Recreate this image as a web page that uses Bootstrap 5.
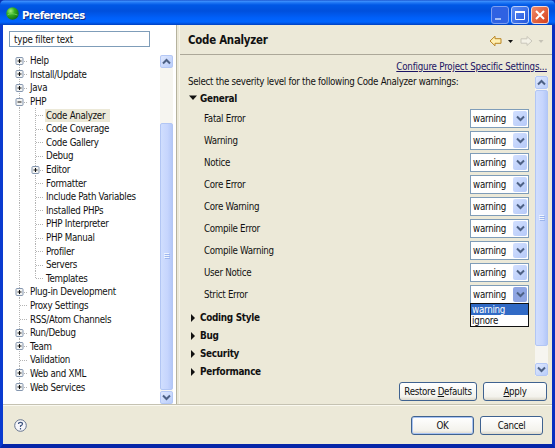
<!DOCTYPE html>
<html lang="en">
<head>
<meta charset="utf-8">
<title>Preferences</title>
<link href="https://cdn.jsdelivr.net/npm/bootstrap@5.3.0/dist/css/bootstrap.min.css" rel="stylesheet">
<style>
html,body{height:448px;overflow:hidden}
body{font-family:"DejaVu Sans Condensed","DejaVu Sans",sans-serif;font-stretch:condensed;font-size:9.7px;line-height:13px;color:#111;background:#0831b4;letter-spacing:-.29px;white-space:nowrap}
svg{display:block;flex:none}
.win{width:555px;height:448px}
.titlebar{height:25px;padding:1px 6px 0 6px;background:linear-gradient(#0a3fc0 0,#4596ff 1px,#2a80f8 2px,#0058e6 5px,#0050dd 11px,#0060fa 18px,#0065ff 22px,#0040c0 25px);border-radius:5px 5px 0 0;color:#fff}
.titlebar .caption{font-size:11.2px;font-weight:bold;text-shadow:1px 1px #0a2a80;letter-spacing:-.5px;margin-left:3px;padding-top:4px}
.winbtns{gap:2px;padding-top:3px}
.winbtn{width:18px;height:18px;border:1px solid #b9cdf8;border-radius:3px;background:linear-gradient(135deg,#5c8cf4,#2458dc)}
.winbtn.dim{border-color:#7d9ff0;background:#2f62e2}
.winbtn.quit{border-color:#f6d8cf;background:linear-gradient(135deg,#f08a68,#d5401c)}
.frame-body{height:423px;background:#ece9d8;border:solid #0a3bd0;border-width:0 3px 4px 3px;border-bottom-color:#0626a8;border-right-color:#0a2fc0}
.upper{height:379px}
.tree-pane{width:173px;background:#fff}
.filter{width:141px;height:16px;margin:6px 0 0 6px;border:1px solid #7f9db9;padding:1px 4px 0;line-height:14px;letter-spacing:-.22px}
.tree{width:157px;margin-top:7px;padding-left:12px}
.node{height:13.6px}
.node .name{margin-left:2px;padding:0 1px}
.node.child .name{margin-left:2px}
.node.child .name.sel{background:#ece9d8;padding-right:5px;margin-right:-5px}
.sb{width:13px;background:#f6f5f0}
.sb-btn{height:13px;border:1px solid #b4c8f6;border-radius:2px;background:linear-gradient(135deg,#dfe8fe,#b9cdfa)}
.sb-thumb{border:1px solid #b2c6f4;border-radius:2px;background:linear-gradient(90deg,#d0defe,#c6d5fd 60%,#b4c8f8)}
.sb.left{margin-top:8px;height:349px}
.sb.left .sb-thumb{margin-top:55px;margin-bottom:1px}
.sb.right .sb-thumb{height:256px;margin-top:1px}
.sash{width:4px;background:#ece9d8;border-left:1px solid #b5b29e;border-right:1px solid #f7f5ea}
.head{height:30px;border-bottom:1px solid #aca899;padding:2px 6px 0 8px}
.head .ttl{font-size:11.4px;font-weight:bold;letter-spacing:-.25px}
.conf{color:#1b1464;text-decoration:underline;text-underline-offset:1px;height:21px;padding:5px 5px 0 0;letter-spacing:-.2px}
.opts{height:300px;padding:0 4px 0 8px}
.lead-in{width:0;margin-top:-1px}
.sec{font-weight:bold;height:18px;letter-spacing:-.3px;font-size:9.9px}
.sec svg{margin-right:2px}
.sec.open{margin-top:1px}
.optlist{margin-bottom:3px}
.opt{height:22.1px;padding:0 6px 0 16px}
.pick{width:59px;height:19px;border:1px solid #7f9db9;background:#fff;padding:0 1px 0 2px;letter-spacing:-.25px}
.arrow{width:14px;height:15px;border-radius:2px;background:linear-gradient(135deg,#d3e0ff,#b5c9f8)}
.arrow.on{background:#8fa5e2}
.drop{top:17px;left:-1px;width:59px;height:24px;border:1px solid #111;background:#fff;z-index:3;line-height:12px}
.drop div{height:11px;padding-left:1px}
.drop .hit{background:#316ac5;color:#fff}
.xp{height:19px;border:1px solid #3f6290;border-radius:3px;background:linear-gradient(#fff,#f3f2ec 80%,#dcd8cb);padding:0;font-size:9.7px;line-height:17px;color:#111;letter-spacing:-.3px}
.xp.main{box-shadow:inset 0 0 0 1px #a9c4f3}
.foot{height:40px;border-top:1px solid #c5c2b2;box-shadow:inset 0 1px #faf9f0;padding:1px 9px 0 11px}
.acts{gap:6px;padding-right:5px;margin-top:6px}
.rest{width:78px}
.appl{width:64px}
.ok,.canc{width:63px}
.ok{margin-right:6px}
</style>
<script src="https://cdn.jsdelivr.net/npm/bootstrap@5.3.0/dist/js/bootstrap.bundle.min.js"></script>
</head>
<body>
<svg width="0" height="0" class="position-absolute"><defs>
<symbol id="up" viewBox="0 0 9 7"><path d="M1 5.5 4.5 2 8 5.5" fill="none" stroke="#4d6185" stroke-width="2"/></symbol>
<symbol id="dn" viewBox="0 0 9 7"><path d="M1 1.5 4.5 5 8 1.5" fill="none" stroke="#4d6185" stroke-width="2"/></symbol>
<symbol id="grip" viewBox="0 0 6 7"><path d="M0 .5h5M0 2.5h5M0 4.5h5" stroke="#eef4fe"/><path d="M1 1.5h5M1 3.5h5M1 5.5h5" stroke="#9db6ee"/></symbol>
</defs></svg>
<div class="win d-flex flex-column">
  <div class="titlebar d-flex align-items-center">
    <svg width="13" height="13" viewBox="0 0 13 13"><defs><radialGradient id="g" cx=".35" cy=".3" r=".8"><stop offset="0" stop-color="#a6f080"/><stop offset=".4" stop-color="#35b022"/><stop offset="1" stop-color="#0b6512"/></radialGradient></defs><circle cx="6.5" cy="6.5" r="6.2" fill="url(#g)"/><path d="M1.500 8Q5 5.500 11.500 8" stroke="#78d860" stroke-width=".8" fill="none"/></svg>
    <span class="caption me-auto">Preferences</span>
    <div class="winbtns d-flex align-items-center">
      <div class="winbtn dim"><svg width="16" height="16"><path d="M3 12h6" stroke="#a5bff6" stroke-width="2"/></svg></div>
      <div class="winbtn"><svg width="16" height="16"><path d="M3.500 4.500h9v8h-9z" fill="none" stroke="#fff"/><path d="M3 5h10" stroke="#fff" stroke-width="2"/></svg></div>
      <div class="winbtn quit"><svg width="16" height="16"><path d="m4 4 8 8m0-8-8 8" stroke="#fff" stroke-width="2"/></svg></div>
    </div>
  </div>
  <div class="frame-body">
    <div class="upper d-flex">
      <div class="tree-pane">
        <div class="filter">type filter text</div>
        <div class="d-flex">
          <div class="tree" id="tree"></div>
          <div class="sb left d-flex flex-column">
            <div class="sb-btn d-flex align-items-center justify-content-center"><svg width="9" height="7"><use href="#up"/></svg></div>
            <div class="sb-thumb flex-grow-1 d-flex align-items-center justify-content-center"><svg width="6" height="7"><use href="#grip"/></svg></div>
            <div class="sb-btn d-flex align-items-center justify-content-center mt-auto"><svg width="9" height="7"><use href="#dn"/></svg></div>
          </div>
        </div>
      </div>
      <div class="sash"></div>
      <div class="flex-grow-1">
        <div class="head d-flex align-items-center"><span class="ttl me-auto">Code Analyzer</span>
          <svg width="57" height="12" viewBox="0 0 57 12"><path d="M1 6 6 1.200v2.500h6v4.600H6v2.500z" fill="#ffefb0" stroke="#b98524"/><path d="M19 5h5l-2.500 3z" fill="#111"/><path d="M43 6 38 1.500v2.300h-6v4.400h6v2.300z" fill="#f3f1e6" stroke="#c9c6ba"/><path d="M49.500 5h5L52 8z" fill="#c5c2b6"/></svg>
        </div>
        <div class="conf text-end">Configure Project Specific Settings...</div>
        <div class="opts d-flex">
          <div class="flex-grow-1">
            <div class="lead-in">Select the severity level for the following Code Analyzer warnings:</div>
            <div class="sec open d-flex align-items-center"><svg width="10" height="8"><path d="M1 1.500h8L5 6z" fill="#111"/></svg>General</div>
            <div id="opts" class="optlist"></div>
            <div class="sec d-flex align-items-center">Coding Style</div>
            <div class="sec d-flex align-items-center">Bug</div>
            <div class="sec d-flex align-items-center">Security</div>
            <div class="sec d-flex align-items-center">Performance</div>
          </div>
          <div class="sb right d-flex flex-column">
            <div class="sb-btn d-flex align-items-center justify-content-center"><svg width="9" height="7"><use href="#up"/></svg></div>
            <div class="sb-thumb d-flex align-items-center justify-content-center"><svg width="6" height="7"><use href="#grip"/></svg></div>
            <div class="sb-btn d-flex align-items-center justify-content-center mt-auto"><svg width="9" height="7"><use href="#dn"/></svg></div>
          </div>
        </div>
        <div class="acts d-flex justify-content-end"><button class="btn xp rest">Restore <u>D</u>efaults</button><button class="btn xp appl"><u>A</u>pply</button></div>
      </div>
    </div>
    <div class="foot d-flex align-items-center">
      <svg class="me-auto" width="13" height="13" viewBox="0 0 13 13"><circle cx="6.500" cy="6.500" r="5.800" fill="#f7f7fb" stroke="#65748f"/><path d="M4.500 5Q4.500 3.300 6.500 3.300T8.500 5Q8.500 6 6.500 6.900V8M6.500 9v1.400" fill="none" stroke="#40567f" stroke-width="1.200"/></svg>
      <button class="btn xp main ok">OK</button><button class="btn xp canc">Cancel</button>
    </div>
  </div>
</div>
<script>
const rows=[["+","Help"],["+","Install/Update"],["+","Java"],["-","PHP"],
 ..."Code Analyzer|Code Coverage|Code Gallery|Debug|Editor|Formatter|Include Path Variables|Installed PHPs|PHP Interpreter|PHP Manual|Profiler|Servers|Templates".split("|").map(n=>[n==="Editor"?"+":"",n,1]),
 ["+","Plug-in Development"],["","Proxy Settings"],["","RSS/Atom Channels"],["+","Run/Debug"],["+","Team"],["","Validation"],["+","Web and XML"],["+","Web Services"]];
const dot=d=>`<path d="${d}" stroke="#b4b4b4" stroke-dasharray="1 1"/>`;
document.getElementById("tree").innerHTML=rows.map(([b,n,c],i)=>{
  const x=c?21:5,w=c?28:12,last=i===rows.length-1||n==="Templates";
  let s=dot(`M${x-.5} ${i?0:7}V${last?7:14}`)+dot(`M${x} 7.500H${w}`);
  if(c)s+=dot("M4.500 0V14");
  if(b)s+=`<rect x="${x-4}" y="3.500" width="7" height="7" rx="1" fill="#f4f4f2" stroke="#8597b0"/><path d="M${x-2.500} 7h4${b==="+"?`M${x-.5} 5v4`:""}" stroke="#111"/>`;
  return `<div class="node d-flex align-items-center ${c?"child":""}"><svg width="${w}" height="14">${s}</svg><span class="name ${n==="Code Analyzer"?"sel":""}">${n}</span></div>`;
}).join("");
document.getElementById("opts").innerHTML="Fatal Error|Warning|Notice|Core Error|Core Warning|Compile Error|Compile Warning|User Notice|Strict Error".split("|").map((n,i)=>
 `<div class="opt d-flex align-items-center"><span class="me-auto">${n}</span><div class="pick position-relative d-flex align-items-center justify-content-between"><span>warning</span><div class="arrow ${i===8?"on":""} d-flex align-items-center justify-content-center"><svg width="9" height="7"><use href="#dn"/></svg></div>${i===8?'<div class="drop position-absolute"><div class="hit">warning</div><div>ignore</div></div>':""}</div></div>`).join("");
document.querySelectorAll(".sec:not(.open)").forEach(e=>e.insertAdjacentHTML("afterbegin",'<svg width="10" height="8"><path d="M3 0v8l4-4z" fill="#111"/></svg>'));
</script>
</body>
</html>
